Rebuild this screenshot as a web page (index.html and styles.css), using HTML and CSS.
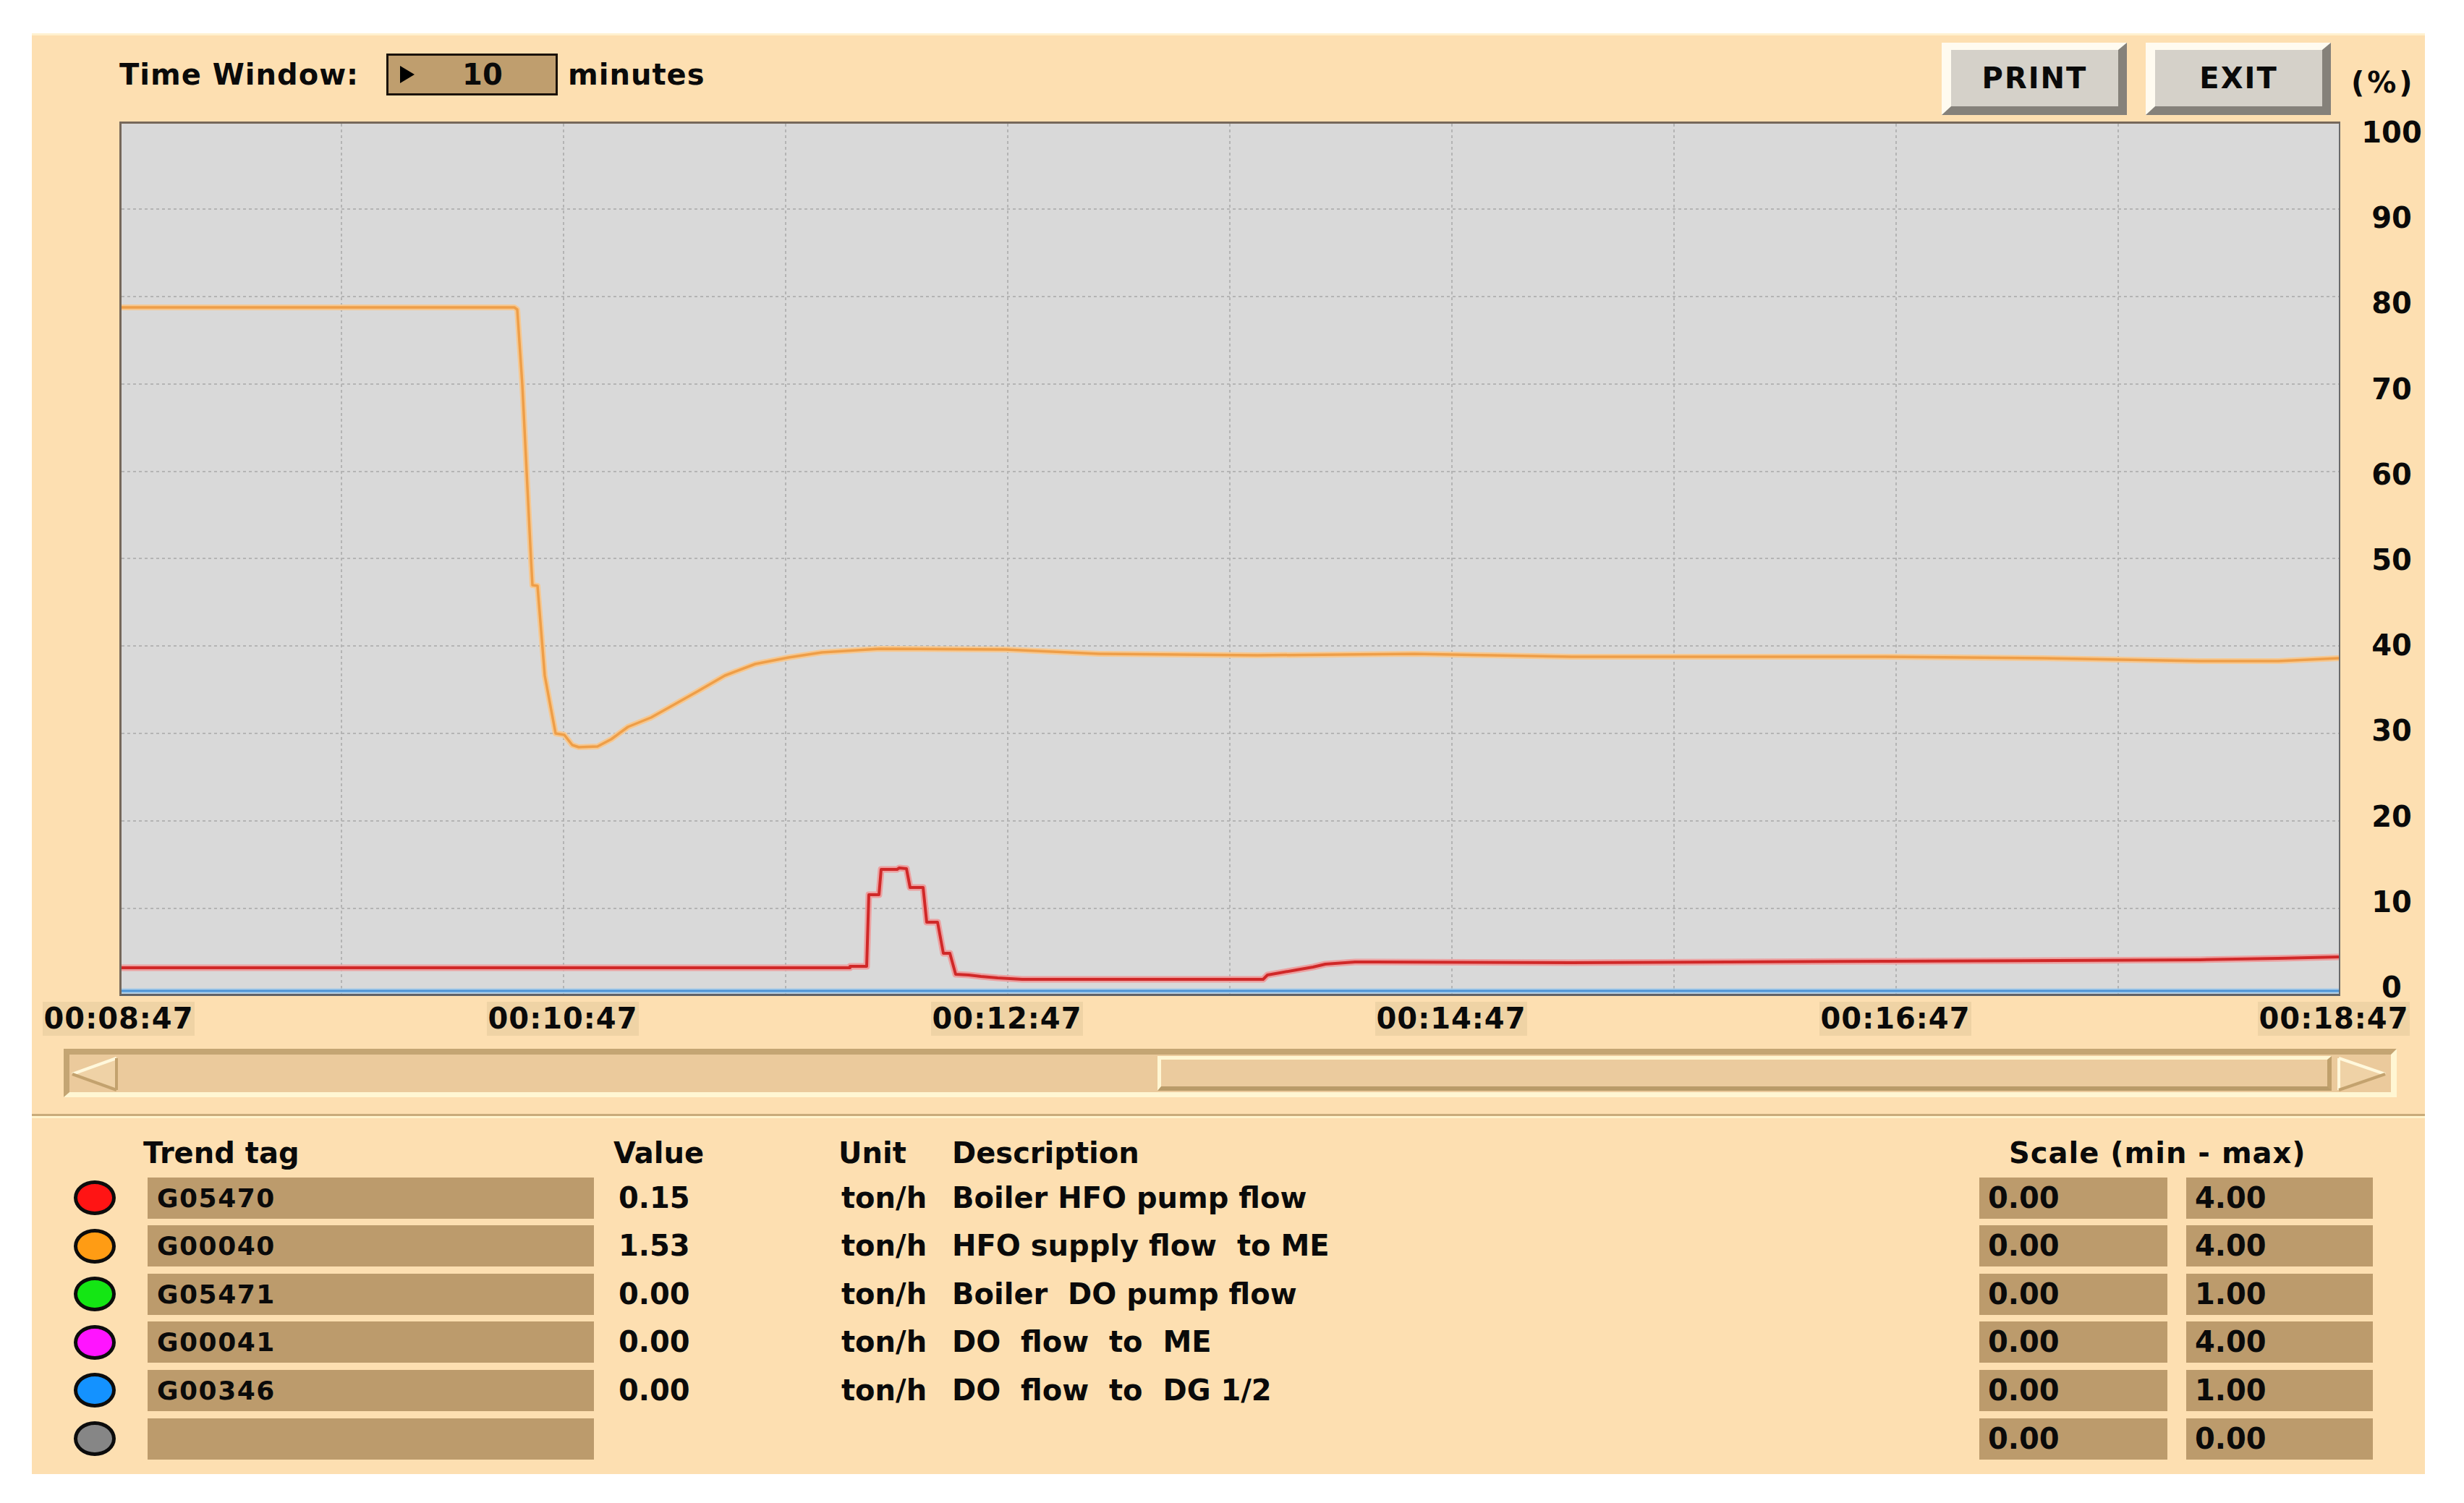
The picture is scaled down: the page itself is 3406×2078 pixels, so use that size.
FILE: index.html
```html
<!DOCTYPE html>
<html>
<head>
<meta charset="utf-8">
<title>Trend</title>
<link rel="stylesheet" href="styles.css">
</head>
<body>
<div class="panel">
  <div class="topbar">
    <div class="tw-group">
      <span class="tw-label">Time Window:</span>
      <div class="tw-box"><span class="tw-tri"></span><span class="tw-val">10</span></div>
      <span class="tw-unit">minutes</span>
    </div>
    <div class="buttons">
      <div class="btn">PRINT</div>
      <div class="btn">EXIT</div>
    </div>
    <span class="pct">(%)</span>
  </div>

  <div class="chart-row">
    <div class="plot">
      <svg class="plot-svg" viewBox="0 0 3065 1203" preserveAspectRatio="none">
        <g class="grid">
          <line x1="0" y1="118" x2="3065" y2="118"/>
          <line x1="0" y1="239" x2="3065" y2="239"/>
          <line x1="0" y1="360" x2="3065" y2="360"/>
          <line x1="0" y1="481" x2="3065" y2="481"/>
          <line x1="0" y1="601" x2="3065" y2="601"/>
          <line x1="0" y1="722" x2="3065" y2="722"/>
          <line x1="0" y1="843" x2="3065" y2="843"/>
          <line x1="0" y1="964" x2="3065" y2="964"/>
          <line x1="0" y1="1085" x2="3065" y2="1085"/>
          <line x1="304" y1="0" x2="304" y2="1203"/>
          <line x1="611" y1="0" x2="611" y2="1203"/>
          <line x1="918" y1="0" x2="918" y2="1203"/>
          <line x1="1225" y1="0" x2="1225" y2="1203"/>
          <line x1="1532" y1="0" x2="1532" y2="1203"/>
          <line x1="1839" y1="0" x2="1839" y2="1203"/>
          <line x1="2146" y1="0" x2="2146" y2="1203"/>
          <line x1="2453" y1="0" x2="2453" y2="1203"/>
          <line x1="2760" y1="0" x2="2760" y2="1203"/>
        </g>
        <line class="blue-halo" x1="0" y1="1199" x2="3065" y2="1199"/>
        <line class="blue" x1="0" y1="1199" x2="3065" y2="1199"/>
        <polyline class="orange-halo" points="0,254 543,254 547,257 554,361 566,602 568,638 575,639 585,763 600,843 612,845 623,859 632,862 658,861 677,851 700,834 732,821 757,807 796,785 834,763 876,747 922,738 968,731 1032,727 1048,726 1222,727 1352,733 1570,735 1787,733 1895,735 2004,737 2438,737 2656,739 2873,743 2981,743 3065,739"/>
        <polyline class="orange" points="0,254 543,254 547,257 554,361 566,602 568,638 575,639 585,763 600,843 612,845 623,859 632,862 658,861 677,851 700,834 732,821 757,807 796,785 834,763 876,747 922,738 968,731 1032,727 1048,726 1222,727 1352,733 1570,735 1787,733 1895,735 2004,737 2438,737 2656,739 2873,743 2981,743 3065,739"/>
        <polyline class="red-halo" points="0,1167 1007,1167 1007,1165 1030,1165 1033,1066 1047,1066 1050,1031 1072,1031 1075,1029 1085,1030 1090,1056 1108,1056 1113,1104 1128,1104 1136,1147 1145,1147 1153,1176 1171,1177 1188,1179 1211,1181 1245,1183 1578,1183 1584,1177 1601,1174 1624,1170 1647,1166 1664,1162 1705,1159 1732,1159 2004,1160 2438,1158 2873,1156 2981,1154 3065,1152"/>
        <polyline class="red" points="0,1167 1007,1167 1007,1165 1030,1165 1033,1066 1047,1066 1050,1031 1072,1031 1075,1029 1085,1030 1090,1056 1108,1056 1113,1104 1128,1104 1136,1147 1145,1147 1153,1176 1171,1177 1188,1179 1211,1181 1245,1183 1578,1183 1584,1177 1601,1174 1624,1170 1647,1166 1664,1162 1705,1159 1732,1159 2004,1160 2438,1158 2873,1156 2981,1154 3065,1152"/>
      </svg>
    </div>
    <div class="yaxis">
      <span>100</span><span>90</span><span>80</span><span>70</span><span>60</span><span>50</span><span>40</span><span>30</span><span>20</span><span>10</span><span>0</span>
    </div>
  </div>

  <div class="time-row">
    <span class="tlabel">00:08:47</span>
    <span class="tlabel">00:10:47</span>
    <span class="tlabel">00:12:47</span>
    <span class="tlabel">00:14:47</span>
    <span class="tlabel">00:16:47</span>
    <span class="tlabel tlabel-last">00:18:47</span>
  </div>

  <div class="scrollbar">
    <div class="sb-btn sb-left">
      <svg viewBox="0 0 68 52" width="68" height="52">
        <polygon points="4,27 65,5 65,49" fill="#efd2a6"/>
        <line x1="4" y1="27" x2="65" y2="5" stroke="#fff8dc" stroke-width="4"/>
        <line x1="4" y1="27" x2="65" y2="49" stroke="#c3a26e" stroke-width="4"/>
        <line x1="65" y1="5" x2="65" y2="49" stroke="#c3a26e" stroke-width="4"/>
      </svg>
    </div>
    <div class="sb-track">
      <div class="sb-thumb"></div>
    </div>
    <div class="sb-btn sb-right">
      <svg viewBox="0 0 76 52" width="76" height="52">
        <polygon points="4,5 68,27 4,49" fill="#efd2a6"/>
        <line x1="4" y1="5" x2="68" y2="27" stroke="#fff8dc" stroke-width="4"/>
        <line x1="4" y1="5" x2="4" y2="49" stroke="#fff8dc" stroke-width="4"/>
        <line x1="4" y1="49" x2="68" y2="27" stroke="#c3a26e" stroke-width="4"/>
      </svg>
    </div>
  </div>

  <div class="divider"></div>

  <div class="table">
    <div class="th"></div>
    <div class="th th-tag">Trend tag</div>
    <div class="th th-value">Value</div>
    <div class="th th-unit">Unit</div>
    <div class="th">Description</div>
    <div class="th th-scale">Scale (min - max)</div>

    <div class="cell"><span class="dot dot-red"></span></div>
    <div class="cell"><span class="tagbox">G05470</span></div>
    <div class="cell">0.15</div>
    <div class="cell">ton/h</div>
    <div class="cell desc">Boiler HFO pump flow</div>
    <div class="cell"><span class="scalebox">0.00</span></div>
    <div class="cell"><span class="scalebox">4.00</span></div>

    <div class="cell"><span class="dot dot-orange"></span></div>
    <div class="cell"><span class="tagbox">G00040</span></div>
    <div class="cell">1.53</div>
    <div class="cell">ton/h</div>
    <div class="cell desc">HFO supply flow  to ME</div>
    <div class="cell"><span class="scalebox">0.00</span></div>
    <div class="cell"><span class="scalebox">4.00</span></div>

    <div class="cell"><span class="dot dot-green"></span></div>
    <div class="cell"><span class="tagbox">G05471</span></div>
    <div class="cell">0.00</div>
    <div class="cell">ton/h</div>
    <div class="cell desc">Boiler  DO pump flow</div>
    <div class="cell"><span class="scalebox">0.00</span></div>
    <div class="cell"><span class="scalebox">1.00</span></div>

    <div class="cell"><span class="dot dot-magenta"></span></div>
    <div class="cell"><span class="tagbox">G00041</span></div>
    <div class="cell">0.00</div>
    <div class="cell">ton/h</div>
    <div class="cell desc">DO  flow  to  ME</div>
    <div class="cell"><span class="scalebox">0.00</span></div>
    <div class="cell"><span class="scalebox">4.00</span></div>

    <div class="cell"><span class="dot dot-blue"></span></div>
    <div class="cell"><span class="tagbox">G00346</span></div>
    <div class="cell">0.00</div>
    <div class="cell">ton/h</div>
    <div class="cell desc">DO  flow  to  DG 1/2</div>
    <div class="cell"><span class="scalebox">0.00</span></div>
    <div class="cell"><span class="scalebox">1.00</span></div>

    <div class="cell"><span class="dot dot-gray"></span></div>
    <div class="cell"><span class="tagbox"></span></div>
    <div class="cell"></div>
    <div class="cell"></div>
    <div class="cell desc"></div>
    <div class="cell"><span class="scalebox">0.00</span></div>
    <div class="cell"><span class="scalebox">0.00</span></div>
  </div>
</div>
</body>
</html>
```

FILE: styles.css
```css
html, body {
  margin: 0;
  padding: 0;
  background: #ffffff;
}

body {
  width: 3406px;
  height: 2078px;
  overflow: hidden;
  font-family: "DejaVu Sans", Verdana, sans-serif;
  font-weight: bold;
  color: #0a0a0a;
}

.panel {
  margin: 46px 0 0 44px;
  width: 3308px;
  height: 1992px;
  box-sizing: border-box;
  background: #fddfb1;
  border-top: 3px solid #fff1cf;
}

/* ---------- top bar ---------- */
.topbar {
  height: 119px;
  display: flex;
  align-items: center;
  padding-left: 121px;
}

.tw-group {
  display: flex;
  align-items: center;
  margin-bottom: 12px;
  font-size: 40px;
}

.tw-label {
  letter-spacing: 1px;
}

.tw-box {
  margin-left: 38px;
  width: 237px;
  height: 58px;
  box-sizing: border-box;
  border: 3px solid #1a1208;
  background: #bf9e6e;
  display: flex;
  align-items: center;
  padding-left: 16px;
}

.tw-tri {
  width: 0;
  height: 0;
  border-left: 20px solid #000;
  border-top: 12px solid transparent;
  border-bottom: 12px solid transparent;
}

.tw-val {
  margin-left: 66px;
}

.tw-unit {
  margin-left: 14px;
  letter-spacing: 1px;
}

.buttons {
  margin-left: auto;
  display: flex;
  gap: 26px;
}

.btn {
  width: 256px;
  height: 100px;
  box-sizing: border-box;
  border-style: solid;
  border-width: 10px 12px 12px 13px;
  border-color: #fffbf0 #85817a #85817a #fffbf0;
  background: #d5d1c9;
  display: flex;
  align-items: center;
  justify-content: center;
  font-size: 40px;
  letter-spacing: 2px;
}

.pct {
  flex: 0 0 102px;
  margin-left: 28px;
  margin-top: 10px;
  font-size: 40px;
  letter-spacing: 4px;
}

/* ---------- chart ---------- */
.chart-row {
  display: flex;
  padding-left: 121px;
  height: 1209px;
}

.plot {
  width: 3070px;
  height: 1209px;
  box-sizing: border-box;
  background: #d9d9d9;
  border-top: 3px solid #76685a;
  border-left: 3px solid #76685a;
  border-right: 2px solid #6a6a6a;
  border-bottom: 3px solid #5e6268;
}

.plot-svg {
  display: block;
  width: 100%;
  height: 100%;
}

.grid line {
  stroke: #b4b4b4;
  stroke-width: 2;
  stroke-dasharray: 4 4;
}

.orange-halo {
  fill: none;
  stroke: #f6c891;
  stroke-width: 8;
  stroke-linejoin: round;
}

.orange {
  fill: none;
  stroke: #ee9e48;
  stroke-width: 3.5;
  stroke-linejoin: round;
}

.red-halo {
  fill: none;
  stroke: #eca0a0;
  stroke-width: 9;
  stroke-linejoin: round;
}

.red {
  fill: none;
  stroke: #d02828;
  stroke-width: 4;
  stroke-linejoin: round;
}

.blue-halo {
  stroke: #a8cce8;
  stroke-width: 7;
}

.blue {
  stroke: #4d94d6;
  stroke-width: 3;
}

.yaxis {
  flex: 1;
  padding-left: 25px;
  display: flex;
  flex-direction: column;
  justify-content: space-between;
  align-items: center;
  margin-bottom: -3px;
  font-size: 40px;
  line-height: 30px;
}

/* ---------- time labels ---------- */
.time-row {
  margin-top: 8px;
  height: 47px;
  padding-left: 15px;
  display: flex;
  gap: 404px;
}

.tlabel {
  width: 210px;
  height: 47px;
  background: #efd3a5;
  font-size: 40px;
  line-height: 47px;
  text-align: center;
  letter-spacing: 1px;
}

.tlabel-last {
  margin-left: -8px;
}

/* ---------- scrollbar ---------- */
.scrollbar {
  margin-top: 18px;
  margin-left: 44px;
  width: 3225px;
  height: 67px;
  box-sizing: border-box;
  border-style: solid;
  border-width: 8px 8px 7px 8px;
  border-color: #c4a573 #fff6d3 #fff6d3 #c4a573;
  background: #ebca9c;
  display: flex;
}

.sb-btn {
  height: 52px;
}

.sb-btn svg {
  display: block;
}

.sb-left {
  width: 68px;
}

.sb-right {
  width: 76px;
}

.sb-track {
  flex: 1;
  display: flex;
  padding: 2px 6px 2px 1436px;
}

.sb-thumb {
  flex: 1;
  box-sizing: border-box;
  border-style: solid;
  border-width: 5px 6px 6px 5px;
  border-color: #fff6d3 #c0a06c #b99b69 #fff6d3;
  background: #ebcb9e;
}

/* ---------- divider ---------- */
.divider {
  margin-top: 23px;
  height: 0;
  border-top: 3px solid #c9ab7a;
  border-bottom: 3px solid #fff4cc;
}

/* ---------- table ---------- */
.table {
  padding: 24px 0 0 58px;
  display: grid;
  grid-template-columns: 102px 651px 308px 153px 1420px 286px 258px;
  grid-template-rows: 48px;
  grid-auto-rows: 57px;
  row-gap: 9.6px;
  font-size: 40px;
}

.table .th {
  line-height: 48px;
  margin-bottom: -2.6px;
}

.th-tag {
  margin-left: -6px;
}

.th-value {
  margin-left: -7px;
}

.th-unit {
  margin-left: -4px;
}

.th-scale {
  grid-column: 6 / span 2;
  padding-left: 41px;
  letter-spacing: 1px;
}

.cell {
  display: flex;
  align-items: center;
  height: 57px;
  line-height: 57px;
  white-space: pre;
}

.dot {
  width: 58px;
  height: 48px;
  box-sizing: border-box;
  border: 5px solid #0c0c0c;
  border-radius: 50%;
}

.dot-red { background: #ff1414; }
.dot-orange { background: #ff9c14; }
.dot-green { background: #14e614; }
.dot-magenta { background: #ff14ff; }
.dot-blue { background: #1492ff; }
.dot-gray { background: #868686; }

.tagbox {
  width: 617px;
  height: 57px;
  box-sizing: border-box;
  background: #bc9b6c;
  padding-left: 13px;
  font-size: 36px;
  letter-spacing: 1.5px;
  line-height: 57px;
}

.scalebox {
  width: 260px;
  height: 57px;
  box-sizing: border-box;
  background: #bc9b6c;
  padding-left: 12px;
  line-height: 57px;
}
```
